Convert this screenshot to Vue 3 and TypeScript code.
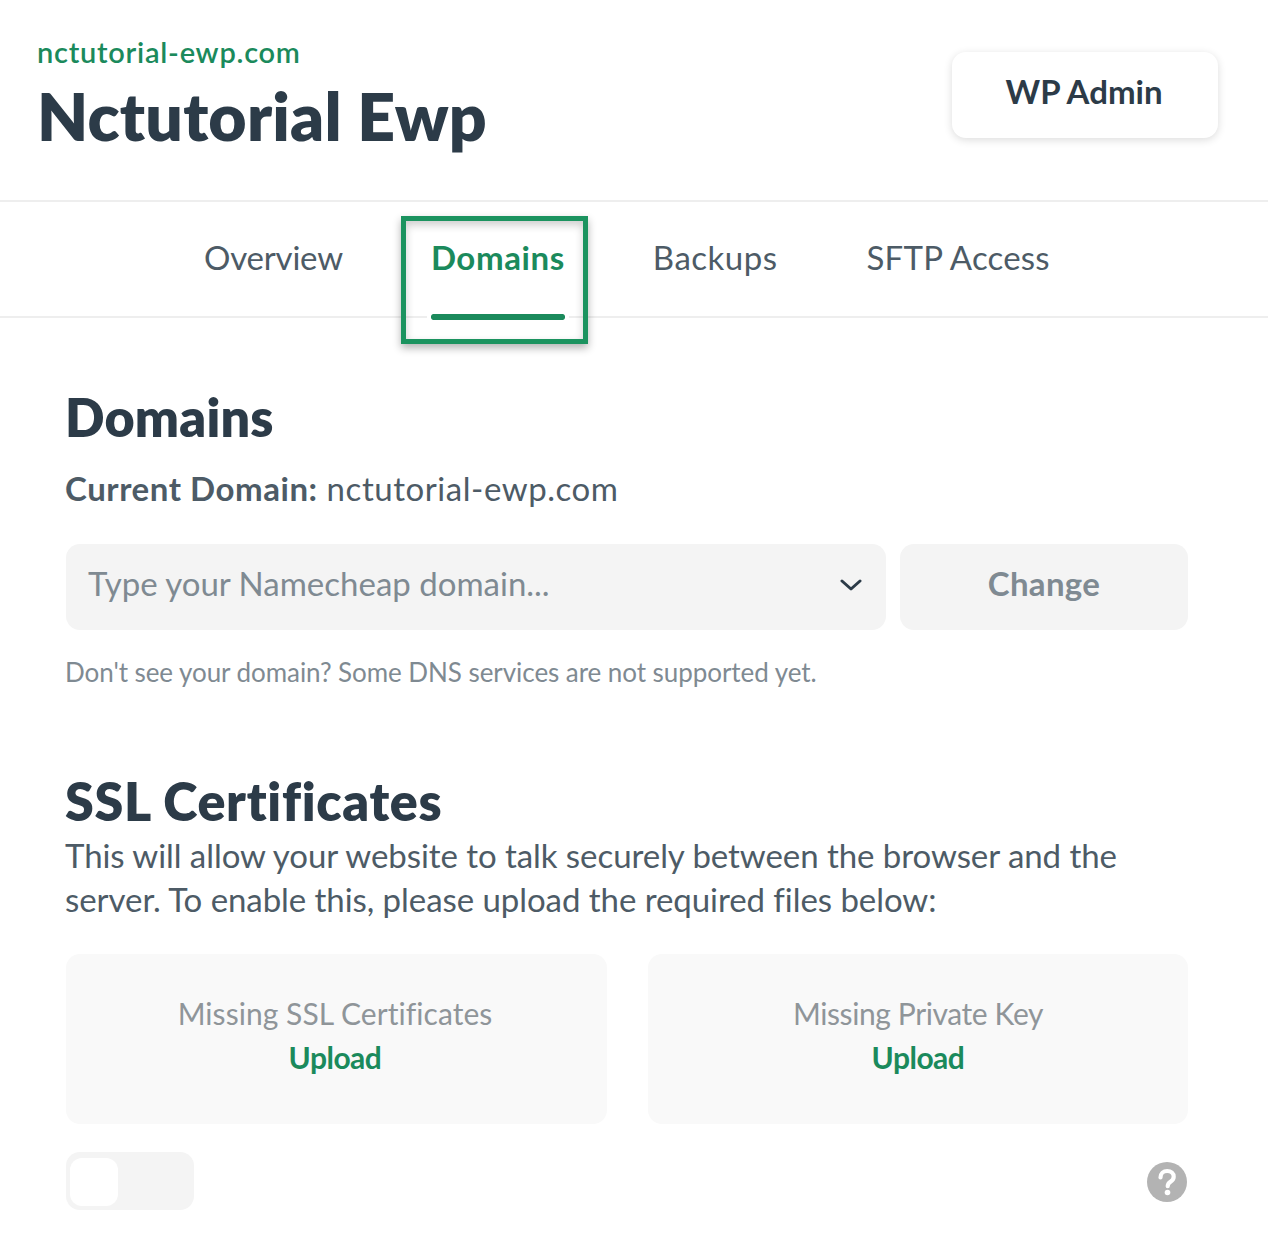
<script setup lang="ts">
const tabs: string[] = ['Overview', 'Domains', 'Backups', 'SFTP Access']
const active = 'Domains'
</script>

<template>
  <div class="page">
    <header class="head">
      <div class="titles">
        <div class="domain">nctutorial-ewp.com</div>
        <h1>Nctutorial Ewp</h1>
      </div>
      <button class="admin">WP Admin</button>
    </header>
    <nav class="tabs">
      <div v-for="t in tabs" :key="t" class="tab" :class="{ on: t === active }">
        {{ t }}
        <span v-if="t === active" class="mark"></span>
        <span v-if="t === active" class="hl"></span>
      </div>
    </nav>
    <main class="body">
      <h2 class="h-dom">Domains</h2>
      <p class="current"><b>Current Domain:</b> nctutorial-ewp.com</p>
      <div class="row">
        <div class="select">
          <span>Type your Namecheap domain...</span>
          <svg class="chev" width="22" height="14" viewBox="0 0 22 14" fill="none"><path d="M2 3l9 8 9-8" stroke="#2c3b48" stroke-width="3" stroke-linecap="round" stroke-linejoin="round"/></svg>
        </div>
        <button class="change">Change</button>
      </div>
      <p class="note">Don't see your domain? Some DNS services are not supported yet.</p>
      <h2 class="h-ssl">SSL Certificates</h2>
      <p class="desc">This will allow your website to talk securely between the browser and the server. To enable this, please upload the required files below:</p>
      <div class="cards">
        <div class="card"><span>Missing SSL Certificates</span><a>Upload</a></div>
        <div class="card"><span>Missing Private Key</span><a>Upload</a></div>
      </div>
      <div class="foot">
        <div class="toggle"><span class="knob"></span></div>
        <svg class="help" width="40" height="40" viewBox="0 0 40 40">
          <circle cx="20" cy="20" r="20" fill="#b3b3b3"/>
          <path d="M13.5 15.5c0-4 3-6.500 6.700-6.500 3.800 0 6.500 2.400 6.500 5.700 0 2.500-1.300 3.800-3.200 5.100-1.800 1.200-2.800 2.200-2.800 4.400" fill="none" stroke="#fff" stroke-width="4.200" stroke-linecap="round"/>
          <circle cx="20.500" cy="30.500" r="2.800" fill="#fff"/>
        </svg>
      </div>
    </main>
  </div>
</template>

<style scoped>
.page {
  width: 1268px;
  height: 1252px;
  background: #fff;
  font-family: Lato, "Open Sans", sans-serif;
  font-variant-ligatures: none;
  color: #2c3b48;
  overflow: hidden;
}
.head {
  height: 202px;
  box-sizing: border-box;
  display: flex;
  justify-content: space-between;
  align-items: flex-start;
  padding: 36px 50px 0 37px;
  border-bottom: 2px solid #eeeeee;
}
.domain { font-size: 29px; line-height: 32px; font-weight: 600; letter-spacing: .75px; color: #1b8a5c; }
h1 { margin: 10px 0 0; font-size: 66px; line-height: 76px; font-weight: 800; letter-spacing: .2px; }
.admin {
  margin-top: 16px;
  width: 266px;
  height: 86px;
  padding: 0 2px 8px 0;
  border: 0;
  border-radius: 14px;
  background: #fff;
  box-shadow: 0 2px 8px rgba(0, 0, 0, .14);
  font: 700 33px Lato, sans-serif;
  color: #2c3b48;
}
.tabs {
  height: 116px;
  box-sizing: border-box;
  display: flex;
  gap: 88px;
  padding-left: 204px;
  border-bottom: 2px solid #eeeeee;
}
.tab {
  position: relative;
  font-size: 33px;
  line-height: 110px;
  height: 114px;
  color: #4d5b66;
  letter-spacing: .2px;
}
.tab:nth-child(1) { letter-spacing: -.2px; }
.tab:nth-child(3) { letter-spacing: .5px; margin-right: 1px; }
.tab.on { color: #1b8a5c; font-weight: 700; letter-spacing: .6px; }
.mark {
  position: absolute;
  left: 0; right: 0; bottom: -4px;
  height: 6px;
  border-radius: 2px;
  background: #1b8a5c;
  outline: 4px solid #fff;
}
.hl {
  position: absolute;
  left: -30px; right: -23px; top: 14px;
  height: 128px;
  box-sizing: border-box;
  border: 5px solid #1b935f;
  box-shadow: 0 4px 8px rgba(0,0,0,.3), inset 0 4px 8px rgba(0,0,0,.2);
}
.body { padding: 0 80px 0 65px; }
h2 { margin: 0; font-size: 52px; line-height: 60px; font-weight: 800; }
.h-dom { padding-top: 69px; letter-spacing: .2px; }
.current { margin: 19px 0 0; font-size: 33px; line-height: 44px; color: #4d5b66; letter-spacing: .55px; }
.current b { font-weight: 700; }
.row { display: flex; gap: 14px; margin: 34px 0 0 1px; }
.select {
  width: 820px; height: 86px;
  box-sizing: border-box;
  padding: 0 24px 8px 22px;
  background: #f4f4f4;
  border-radius: 14px;
  display: flex;
  align-items: center;
  justify-content: space-between;
  font-size: 33px;
  color: #7f8a92;
}
.chev { margin-top: 4px; }
.change {
  width: 288px; height: 86px;
  padding: 0 0 8px;
  border: 0;
  border-radius: 14px;
  background: #f4f4f4;
  font: 700 33px Lato, sans-serif;
  letter-spacing: .3px;
  color: #7f8a92;
}
.note { margin: 24px 0 0; font-size: 26px; line-height: 36px; letter-spacing: -.06px; color: #7f8a92; }
.h-ssl { margin-top: 81px; letter-spacing: .7px; }
.desc { margin: 2px 0 0; font-size: 33px; line-height: 44px; letter-spacing: -.06px; color: #4d5b66; }
.cards { display: grid; grid-template-columns: 541px 540px; gap: 41px; margin: 33px 0 0 1px; }
.card {
  height: 170px;
  border-radius: 14px;
  background: #f9f9f9;
  display: flex;
  flex-direction: column;
  align-items: center;
  padding-top: 37px;
  box-sizing: border-box;
  font-size: 30px;
  line-height: 44px;
  letter-spacing: .05px;
  color: #8f9599;
}
.card:first-child { padding-right: 3px; }
.card:last-child span { letter-spacing: -.4px; }
.card a { font-weight: 700; letter-spacing: -.5px; color: #1b8a5c; }
.foot { display: flex; justify-content: space-between; align-items: center; margin: 28px 0 0 1px; }
.toggle {
  width: 128px; height: 58px;
  box-sizing: border-box;
  padding: 6px 4px;
  background: #f4f4f4;
  border-radius: 14px;
}
.knob { display: block; width: 48px; height: 48px; background: #fff; border-radius: 12px; }
.help { margin: 2px 1px 0 0; }
</style>
